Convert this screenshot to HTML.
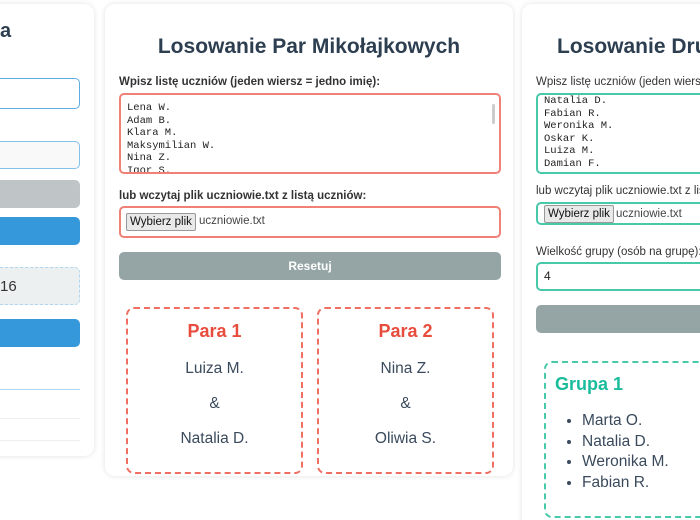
<!DOCTYPE html>
<html><head><meta charset="utf-8"><style>
*{box-sizing:border-box;margin:0;padding:0}
html,body{width:700px;height:520px;overflow:hidden}
body{background:#fff;font-family:"Liberation Sans",sans-serif;color:#2c3e50}
#w{position:relative;width:700px;height:520px;overflow:hidden}
.panel{position:absolute;background:#fff;border-radius:10px;box-shadow:0 0 6px rgba(0,0,0,.12)}
.abs{position:absolute}
h1{position:absolute;font-size:21px;font-weight:bold;color:#2c3e50;white-space:nowrap}
.lbl{position:absolute;font-size:11.5px;color:#333;white-space:nowrap}
.ta{position:absolute;border:2px solid #ef8176;border-radius:5px;font-family:"Liberation Mono",monospace;font-size:10.5px;line-height:12.6px;color:#222;padding:3px 6px;overflow:hidden;white-space:pre}
.fb{position:absolute;border:2px solid #ef8176;border-radius:5px}
.fbtn{position:absolute;background:#e9e9e9;border:1px solid #999;border-radius:2px;font-size:11.5px;color:#111;height:18px;line-height:16px;padding:0 3px;white-space:nowrap}
.fname{position:absolute;font-size:11.5px;color:#444;white-space:nowrap}
.btn{position:absolute;border-radius:5px;color:#fff;font-weight:bold;font-size:12px;text-align:center}
.card{position:absolute;border:2px dashed #ef6f63;border-radius:8px;text-align:center}
.card b{display:block;color:#e74c3c;font-size:18px;position:absolute;width:100%}
.card span{position:absolute;width:100%;left:0;font-size:15.5px;color:#3a4a5c}
</style></head><body><div id="w">
<!-- left panel -->
<div class="panel" style="left:-20px;top:4px;width:114px;height:452px"></div>
<div class="abs" style="left:0;top:20px;font-size:20px;font-weight:bold">a</div>
<div class="abs" style="left:-10px;top:78px;width:90px;height:31px;border:1.5px solid #5dade2;border-radius:5px"></div>
<div class="abs" style="left:-10px;top:141px;width:90px;height:28px;border:1.5px solid #85c1e9;border-radius:5px;background:#f9f9f9"></div>
<div class="abs" style="left:-10px;top:180px;width:90px;height:28px;background:#bfc4c7;border-radius:5px"></div>
<div class="abs" style="left:-10px;top:217px;width:90px;height:28px;background:#3498db;border-radius:5px"></div>
<div class="abs" style="left:-10px;top:267px;width:90px;height:38px;background:#ecf0f1;border:1px dashed #aed6f1;border-radius:5px"></div>
<div class="abs" style="left:0;top:278px;font-size:15px;color:#333">16</div>
<div class="abs" style="left:-10px;top:319px;width:90px;height:28px;background:#3498db;border-radius:5px"></div>
<div class="abs" style="left:0;top:389px;width:80px;height:1px;background:#aed6f1"></div>
<div class="abs" style="left:0;top:418px;width:80px;height:1px;background:#eee"></div>
<div class="abs" style="left:0;top:440px;width:80px;height:1px;background:#eee"></div>

<!-- middle panel -->
<div class="panel" style="left:105px;top:4px;width:408px;height:472px"></div>
<h1 style="left:105px;width:408px;text-align:center;top:35px">Losowanie Par Mikołajkowych</h1>
<div class="lbl" style="left:119px;top:76px;font-weight:bold">Wpisz listę uczniów (jeden wiersz = jedno imię):</div>
<div class="ta" style="left:119px;top:93px;width:382px;height:81px;padding-top:7px">Lena W.
Adam B.
Klara M.
Maksymilian W.
Nina Z.
Igor S.</div>
<div class="abs" style="left:492px;top:104px;width:3px;height:20px;background:#ccc;border-radius:2px"></div>
<div class="lbl" style="left:119px;top:190px;font-weight:bold">lub wczytaj plik uczniowie.txt z listą uczniów:</div>
<div class="fb" style="left:119px;top:206px;width:382px;height:32px"></div>
<div class="fbtn" style="left:126px;top:213px">Wybierz plik</div>
<div class="fname" style="left:199px;top:215px">uczniowie.txt</div>
<div class="btn" style="left:119px;top:252px;width:382px;height:28px;background:#95a5a6;line-height:28px">Resetuj</div>
<div class="card" style="left:126px;top:307px;width:177px;height:167px">
<b style="top:12px">Para 1</b><span style="top:51px">Luiza M.</span><span style="top:86px">&amp;</span><span style="top:121px">Natalia D.</span></div>
<div class="card" style="left:317px;top:307px;width:177px;height:167px">
<b style="top:12px">Para 2</b><span style="top:51px">Nina Z.</span><span style="top:86px">&amp;</span><span style="top:121px">Oliwia S.</span></div>

<!-- right panel -->
<div class="panel" style="left:522px;top:4px;width:200px;height:530px"></div>
<h1 style="left:557px;top:35px">Losowanie Drużyn</h1>
<div class="lbl" style="left:536px;top:76px">Wpisz listę uczniów (jeden wiersz = jedno imię):</div>
<div class="ta" style="left:536px;top:93px;width:200px;height:81px;border-color:#48c9a9;padding-top:0">Natalia D.
Fabian R.
Weronika M.
Oskar K.
Luiza M.
Damian F.</div>
<div class="lbl" style="left:536px;top:185px">lub wczytaj plik uczniowie.txt z listą uczniów:</div>
<div class="fb" style="left:536px;top:202px;width:200px;height:23px;border-color:#48c9a9"></div>
<div class="fbtn" style="left:544px;top:205px;">Wybierz plik</div>
<div class="fname" style="left:616px;top:208px">uczniowie.txt</div>
<div class="lbl" style="left:536px;top:246px">Wielkość grupy (osób na grupę):</div>
<div class="fb" style="left:536px;top:262px;width:200px;height:29px;border-color:#48c9a9"></div>
<div class="abs" style="left:544px;top:269px;font-size:12px;color:#222">4</div>
<div class="btn" style="left:536px;top:305px;width:200px;height:28px;background:#95a5a6"></div>
<div class="abs" style="left:544px;top:361px;width:200px;height:157px;border:2px dashed #48c9a9;border-radius:8px"></div>
<div class="abs" style="left:555px;top:374px;font-size:18px;font-weight:bold;color:#1abc9c">Grupa 1</div>
<ul class="abs" style="left:582px;top:411px;font-size:15.5px;line-height:20.5px;color:#3a4a5c">
<li>Marta O.</li><li>Natalia D.</li><li>Weronika M.</li><li>Fabian R.</li></ul>
</div></body></html>
